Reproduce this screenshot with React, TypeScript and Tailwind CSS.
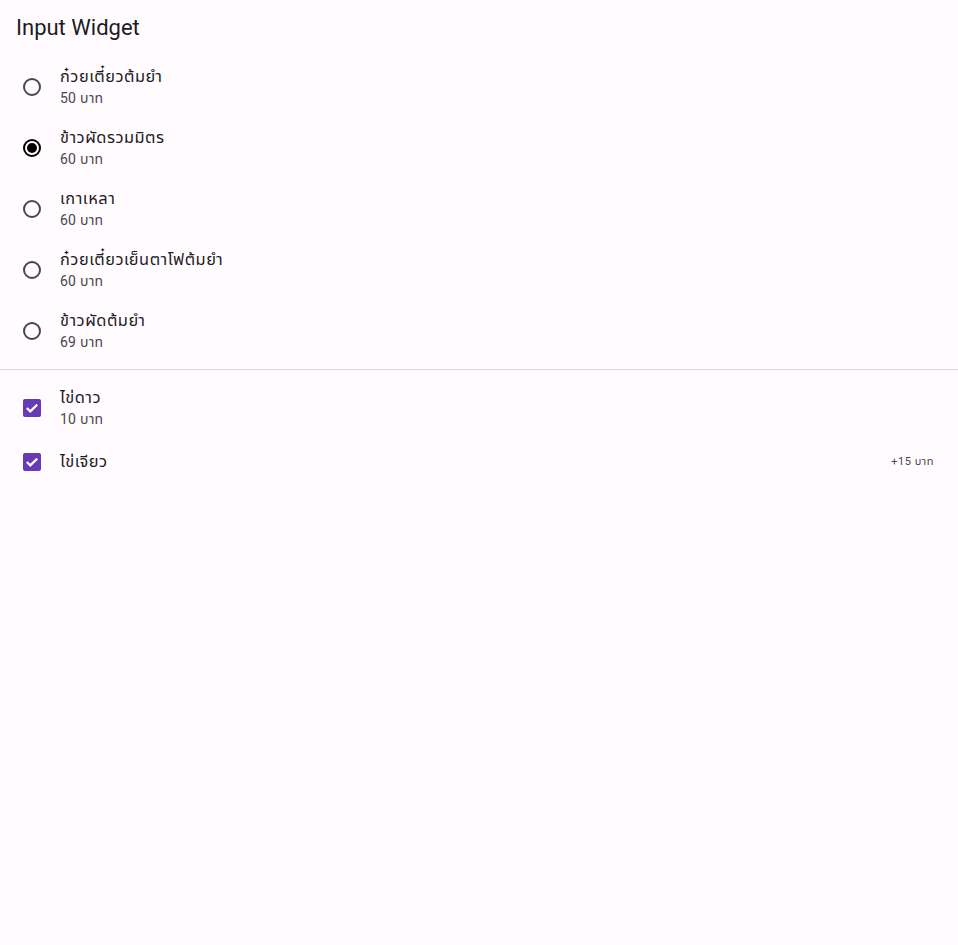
import { useState } from "react"

const foods = [
	{ name: "ก๋วยเตี๋ยวต้มยำ", price: 50 },
	{ name: "ข้าวผัดรวมมิตร", price: 60 },
	{ name: "เกาเหลา", price: 60 },
	{ name: "ก๋วยเตี๋ยวเย็นตาโฟต้มยำ", price: 60 },
	{ name: "ข้าวผัดต้มยำ", price: 69 },
]

function Radio({ checked }: { checked: boolean }) {
	return (
		<svg width="20" height="20" viewBox="0 0 20 20">
			<circle
				cx="10"
				cy="10"
				r="8"
				fill="none"
				stroke={checked ? "#000000" : "#49454F"}
				strokeWidth="2"
			/>
			{checked && <circle cx="10" cy="10" r="5" fill="#000000" />}
		</svg>
	)
}

function Checkbox({ checked }: { checked: boolean }) {
	return (
		<div
			className={
				checked
					? "w-[18px] h-[18px] rounded-[2px] bg-[#673AB7] flex items-center justify-center"
					: "w-[18px] h-[18px] rounded-[2px] border-2 border-[#49454F]"
			}
		>
			{checked && (
				<svg width="14" height="14" viewBox="0 0 14 14">
					<path
						d="M1.8 7 L5.3 10.4 L12.2 3.6"
						fill="none"
						stroke="#ffffff"
						strokeWidth="2.2"
					/>
				</svg>
			)}
		</div>
	)
}

export default function App() {
	const [selected, setSelected] = useState(1)
	const [egg, setEgg] = useState(true)
	const [omelet, setOmelet] = useState(true)

	return (
		<div
			className="min-h-[945px] bg-[#FFFBFE] text-[#1C1B1F]"
			style={{ fontFamily: "Roboto, 'Noto Sans Thai', 'Noto Sans', sans-serif" }}
		>
			<h1 className="px-4 pt-[14px] h-[56px] text-[22px] leading-[28px]">
				Input Widget
			</h1>
			<div>
				{foods.map((food, idx) => (
					<div
						key={food.name}
						onClick={() => setSelected(idx)}
						className="h-[61px] flex items-center pl-[22px] pr-6 cursor-pointer"
					>
						<Radio checked={selected == idx} />
						<div className="ml-[18px] flex flex-col">
							<span className="text-[16.4px] leading-[22px] tracking-[0.5px]">
								{food.name}
							</span>
							<span className="text-[14px] leading-[20px] tracking-[0.25px] text-[#49454F]">
								{food.price} บาท
							</span>
						</div>
					</div>
				))}
			</div>
			<div className="h-4 flex items-center">
				<div className="w-full h-px bg-[#DCD6E0]" />
			</div>
			<div
				onClick={() => setEgg(!egg)}
				className="h-[61px] flex items-center pl-[23px] pr-6 cursor-pointer"
			>
				<Checkbox checked={egg} />
				<div className="ml-[19px] flex flex-col">
					<span className="text-[16.4px] leading-[22px] tracking-[0.5px]">
						ไข่ดาว
					</span>
					<span className="text-[14px] leading-[20px] tracking-[0.25px] text-[#49454F]">
						10 บาท
					</span>
				</div>
			</div>
			<div
				onClick={() => setOmelet(!omelet)}
				className="h-12 flex items-center pl-[23px] pr-6 cursor-pointer"
			>
				<Checkbox checked={omelet} />
				<span className="ml-[19px] flex-1 text-[16.4px] leading-[22px] tracking-[0.5px]">
					ไข่เจียว
				</span>
				<span className="text-[11px] tracking-[0.5px] text-[#49454F]">
					+15 บาท
				</span>
			</div>
		</div>
	)
}
